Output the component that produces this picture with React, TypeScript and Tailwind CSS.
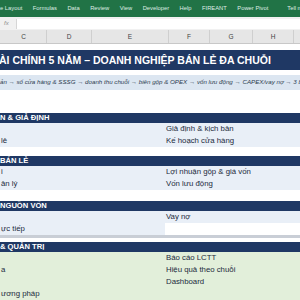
import React from 'react';
import { Lightbulb } from 'lucide-react';

const tabs = ['e Layout', 'Formulas', 'Data', 'Review', 'View', 'Developer', 'Help', 'FIREANT', 'Power Pivot'];

const columns = [
  { letter: 'C', width: 'w-[46px]' },
  { letter: 'D', width: 'w-[45px]' },
  { letter: 'E', width: 'w-[77px]' },
  { letter: 'F', width: 'w-[41px]' },
  { letter: 'G', width: 'w-[43px]' },
  { letter: 'H', width: 'w-[41px]' },
];

type Row = { left?: string; right?: string; rightBg?: string };

function SectionHeader({ title }: { title: string }) {
  return (
    <div className="h-[10px] bg-[#1f3864] flex items-center overflow-hidden whitespace-nowrap">
      <span className="text-[7.6px] font-bold text-white leading-none">{title}</span>
    </div>
  );
}

function SectionRows({ rows, bg }: { rows: Row[]; bg: string }) {
  return (
    <div className={bg}>
      {rows.map((r, i) => (
        <div key={i} className="h-[12px] flex items-center whitespace-nowrap">
          <div className="w-[165px] pl-[1px] text-[7.8px] font-medium text-[#1b2a3c] leading-none">
            {r.left}
          </div>
          <div className={`flex-1 h-full flex items-center pl-[1px] text-[7.8px] font-medium text-[#1b2a3c] leading-none ${r.rightBg ?? ''}`}>
            {r.right}
          </div>
        </div>
      ))}
    </div>
  );
}

export default function App() {
  return (
    <div className="w-[300px] h-[300px] overflow-hidden bg-white font-['Liberation_Sans',Arial,sans-serif]">
      {/* ribbon tabs */}
      <div className="h-[17px] bg-[#217346] flex items-center whitespace-nowrap text-[5.8px] text-[#dfece4]">
        <div className="flex gap-[10.5px]">
          {tabs.map(t => (
            <span key={t}>{t}</span>
          ))}
        </div>
        <Lightbulb className="ml-[16px] w-[8px] h-[8px] text-white" strokeWidth={1.6} />
        <span className="ml-[3px]">Tell m</span>
      </div>

      {/* formula bar */}
      <div className="h-[13px] bg-[#f1f1f1] flex items-center">
        <div className="w-[16px] text-[6px] italic text-[#8a8a8a] pl-[4px]">fx</div>
        <div className="flex-1 h-[10px] bg-white border-l border-[#d6d6d6]" />
      </div>

      {/* column headers */}
      <div className="h-[14px] bg-[#e6e6e6] flex border-b border-[#c8c8c8] pl-[1px]">
        {columns.map(c => (
          <div
            key={c.letter}
            className={`${c.width} flex items-center justify-center border-r border-[#cfcfcf] text-[6.5px] text-[#444]`}
          >
            {c.letter}
          </div>
        ))}
      </div>

      <div className="h-[6px]" />

      {/* title */}
      <div className="h-[20px] bg-[#1f3864] flex items-center overflow-hidden whitespace-nowrap">
        <span className="-ml-[1px] text-[10.5px] font-bold text-white leading-none">
          ÀI CHÍNH 5 NĂM – DOANH NGHIỆP BÁN LẺ ĐA CHUỖI
        </span>
      </div>

      <div className="h-[5px]" />

      {/* subtitle */}
      <div className="h-[15px] bg-[#dce6f1] flex items-center overflow-hidden whitespace-nowrap">
        <span className="text-[6.2px] italic text-[#2b3a4e] leading-none">
          ản → số cửa hàng &amp; SSSG → doanh thu chuỗi → biên gộp &amp; OPEX → vốn lưu động → CAPEX/vay nợ → 3 b
        </span>
      </div>

      <div className="h-[23px]" />

      <SectionHeader title="N & GIẢ ĐỊNH" />
      <SectionRows
        bg="bg-[#e9eff7]"
        rows={[
          { right: 'Giả định & kịch bản' },
          { left: 'lẻ', right: 'Kế hoạch cửa hàng' },
        ]}
      />

      <div className="h-[9px]" />

      <SectionHeader title=" BÁN LẺ" />
      <SectionRows
        bg="bg-[#e9eff7]"
        rows={[
          { left: 'i', right: 'Lợi nhuận gộp & giá vốn' },
          { left: 'ản lý', right: 'Vốn lưu động' },
        ]}
      />

      <div className="h-[11px]" />

      <SectionHeader title=" NGUỒN VỐN" />
      <SectionRows
        bg="bg-[#e9eff7]"
        rows={[
          { right: 'Vay nợ' },
          { left: 'ực tiếp', rightBg: 'bg-white' },
        ]}
      />

      <div className="h-[3px] bg-[#c9ced6]" />
      <div className="h-[4px]" />

      <SectionHeader title="& QUẢN TRỊ" />
      <SectionRows
        bg="bg-[#e2efda]"
        rows={[
          { right: 'Báo cáo LCTT' },
          { left: 'a', right: 'Hiệu quả theo chuỗi' },
          { right: 'Dashboard' },
          { left: 'ương pháp' },
        ]}
      />
    </div>
  );
}
